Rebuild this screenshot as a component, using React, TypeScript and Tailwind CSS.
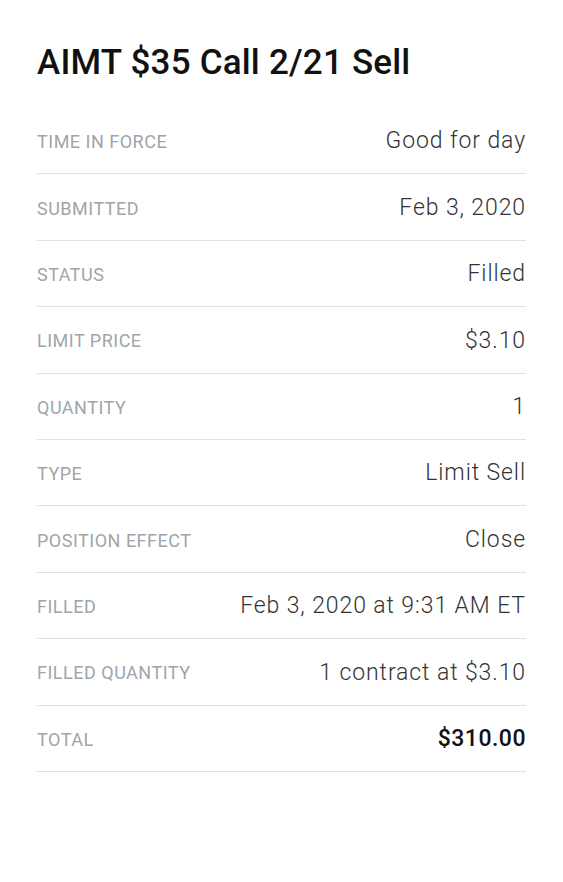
import React from 'react';

const rows: { label: string; value: string; strong?: boolean }[] = [
  { label: 'Time in Force', value: 'Good for day' },
  { label: 'Submitted', value: 'Feb 3, 2020' },
  { label: 'Status', value: 'Filled' },
  { label: 'Limit Price', value: '$3.10' },
  { label: 'Quantity', value: '1' },
  { label: 'Type', value: 'Limit Sell' },
  { label: 'Position Effect', value: 'Close' },
  { label: 'Filled', value: 'Feb 3, 2020 at 9:31 AM ET' },
  { label: 'Filled Quantity', value: '1 contract at $3.10' },
  { label: 'Total', value: '$310.00', strong: true },
];

export default function App() {
  return (
    <div className="min-h-[882px] w-full bg-white px-[37px] pt-[41px] font-['Roboto',sans-serif]">
      <h1 className="h-[67px] text-[35px] leading-[44px] font-medium text-[#111] tracking-[0.2px]">
        AIMT $35 Call 2/21 Sell
      </h1>
      <div className="flex flex-col">
        {rows.map((r) => (
          <div
            key={r.label}
            className="flex h-[66.4px] items-center justify-between border-b border-[#e2e2e2] pt-[2px]"
          >
            <span className="text-[18px] uppercase tracking-[0.5px] text-[#a0a5aa]">{r.label}</span>
            <span
              className={
                r.strong
                  ? 'text-[23px] font-medium tracking-[0.5px] text-[#111]'
                  : 'text-[23px] font-light tracking-[0.9px] text-[#333]'
              }
            >
              {r.value}
            </span>
          </div>
        ))}
      </div>
    </div>
  );
}
